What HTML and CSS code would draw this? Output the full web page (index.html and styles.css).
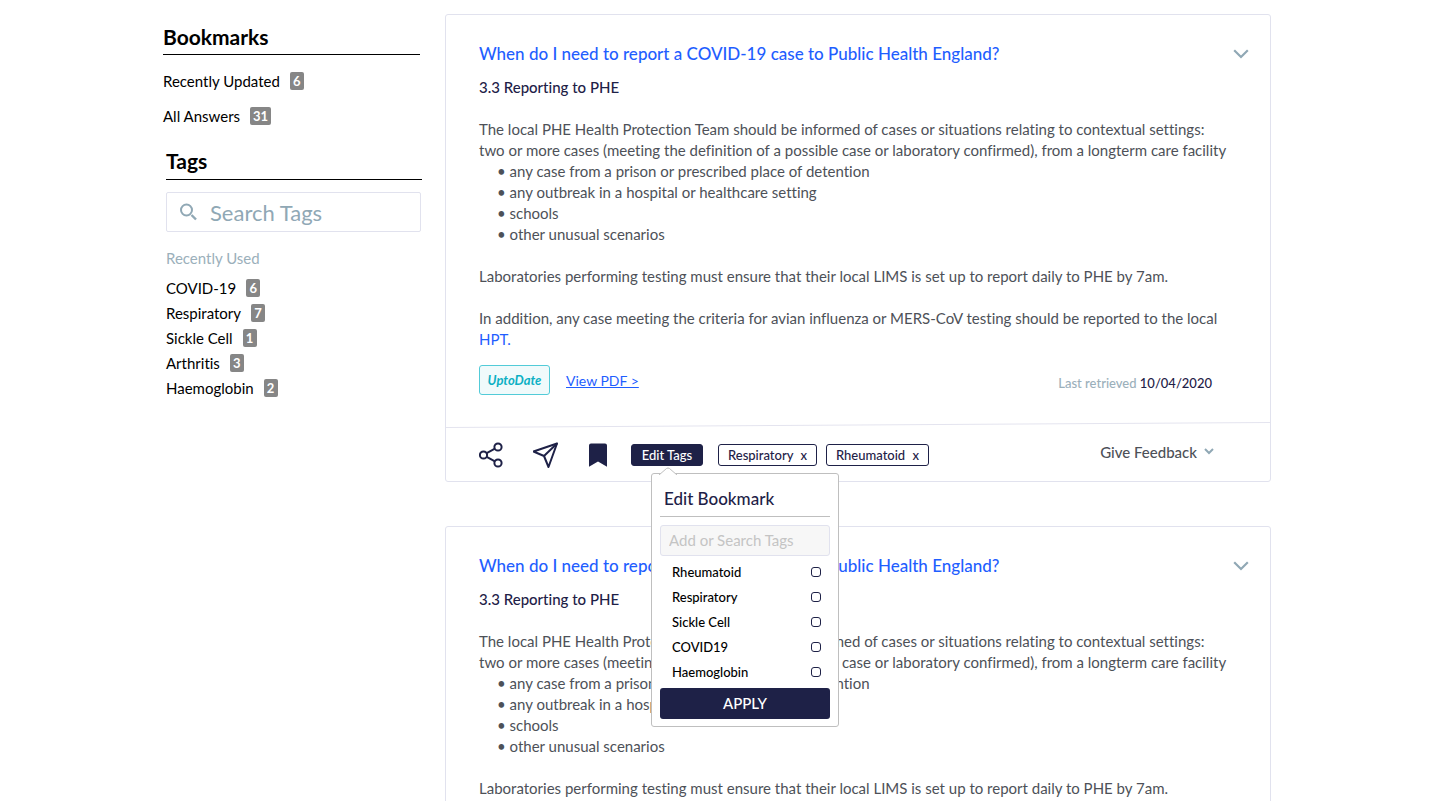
FILE: index.html
```
<!DOCTYPE html>
<html lang="en">
<head>
    <meta charset="UTF-8">
    <meta name="viewport" content="width=device-width, initial-scale=1.0">
    <title>Bookmarks</title>
    <link rel="stylesheet" href="styles.css">
</head>
<body>
    <div class="page">
        <!-- Sidebar -->
        <aside class="sidebar">
            <h2>Bookmarks</h2>
            <ul class="bookmarks">
                <li><a href="#">Recently Updated</a><span class="count">6</span></li>
                <li><a href="#">All Answers</a><span class="count">31</span></li>
            </ul>

            <section class="tags">
                <h2>Tags</h2>
                <div class="search">
                    <svg width="18" height="18" viewBox="0 0 18 18" fill="none" stroke="#90a8b5" stroke-width="2">
                        <circle cx="6.500" cy="7" r="5.500"/>
                        <path d="M11.500 12l4.500 4.500" stroke-width="2.4"/>
                    </svg>
                    <input type="text" placeholder="Search Tags" aria-label="Search Tags">
                </div>
                <h3>Recently Used</h3>
                <ul class="recent">
                    <li><a href="#">COVID-19</a><span class="count">6</span></li>
                    <li><a href="#">Respiratory</a><span class="count">7</span></li>
                    <li><a href="#">Sickle Cell</a><span class="count">1</span></li>
                    <li><a href="#">Arthritis</a><span class="count">3</span></li>
                    <li><a href="#">Haemoglobin</a><span class="count">2</span></li>
                </ul>
            </section>
        </aside>

        <!-- Answers -->
        <main class="answers">
            <article class="card">
                <div class="content">
                    <header>
                        <a class="title" href="#">When do I need to report a COVID-19 case to Public Health England?</a>
                        <button class="toggle" aria-label="Collapse">
                            <svg width="16" height="10" viewBox="0 0 16 10" fill="none" stroke="#90a8b5" stroke-width="2.2"><path d="M1.2 1.3L8 8l6.800-6.700"/></svg>
                        </button>
                    </header>
                    <h4>3.3 Reporting to PHE</h4>
                    <div class="text">
                        <p>The local PHE Health Protection Team should be informed of cases or situations relating to contextual settings:<br>two or more cases (meeting the definition of a possible case or laboratory confirmed), from a longterm care facility</p>
                        <ul>
                            <li>any case from a prison or prescribed place of detention</li>
                            <li>any outbreak in a hospital or healthcare setting</li>
                            <li>schools</li>
                            <li>other unusual scenarios</li>
                        </ul>
                        <p>Laboratories performing testing must ensure that their local LIMS is set up to report daily to PHE by 7am.</p>
                        <p>In addition, any case meeting the criteria for avian influenza or MERS-CoV testing should be reported to the local<br><a href="#">HPT.</a></p>
                    </div>
                    <div class="source">
                        <span class="uptodate">UptoDate</span>
                        <a href="#">View PDF &gt;</a>
                        <span class="retrieved">Last retrieved <time>10/04/2020</time></span>
                    </div>
                </div>
                <svg class="divider" height="6" viewBox="0 0 824 6" preserveAspectRatio="none"><path d="M0 5.5L824 .5" stroke="#e4e4ef"/></svg>
                <footer>
                    <button class="icon" aria-label="Share">
                        <svg width="26" height="28" viewBox="0 0 26 28" fill="none" stroke="#1e2147" stroke-width="2">
                            <circle cx="4.500" cy="14" r="3.600"/>
                            <circle cx="19" cy="6" r="3.600"/>
                            <circle cx="19" cy="22" r="3.600"/>
                            <path d="M7.700 12.200l8.200-4.500M7.700 15.800l8.200 4.500"/>
                        </svg>
                    </button>
                    <button class="icon" aria-label="Send">
                        <svg width="26" height="28" viewBox="0 0 26 28" fill="none" stroke="#1e2147" stroke-width="2" stroke-linejoin="round">
                            <path d="M24 2.500L0.500 10.500l10.500 4.500L15.500 26z"/>
                            <path d="M24 2.500L11 15"/>
                        </svg>
                    </button>
                    <button class="icon" aria-label="Bookmark">
                        <svg width="20" height="28" viewBox="0 0 20 28"><path d="M3 2.500h14a2 2 0 0 1 2 2v21.300l-9-5.300-9 5.300V4.500a2 2 0 0 1 2-2z" fill="#1e2147"/></svg>
                    </button>
                    <div class="edit">
                        <button class="edit-tags">Edit Tags</button>
                        <form class="popover">
                            <svg class="arrow" width="20" height="8" viewBox="0 0 20 8"><path d="M1 8L8.500 1.500q1.500-1 3 0L19 8" fill="#fff" stroke="#bfbfbf"/></svg>
                            <h3>Edit Bookmark</h3>
                            <input type="text" placeholder="Add or Search Tags" aria-label="Add or Search Tags">
                            <label>Rheumatoid<input type="checkbox"></label>
                            <label>Respiratory<input type="checkbox"></label>
                            <label>Sickle Cell<input type="checkbox"></label>
                            <label>COVID19<input type="checkbox"></label>
                            <label>Haemoglobin<input type="checkbox"></label>
                            <button type="button">APPLY</button>
                        </form>
                    </div>
                    <button class="tag">Respiratory <span>x</span></button>
                    <button class="tag">Rheumatoid <span>x</span></button>
                    <button class="feedback">Give Feedback
                        <svg width="10" height="7" viewBox="0 0 10 7" fill="none" stroke="#90a8b5" stroke-width="2"><path d="M1 1l4 4 4-4"/></svg>
                    </button>
                </footer>
            </article>

            <article class="card">
                <div class="content">
                    <header>
                        <a class="title" href="#">When do I need to report a COVID-19 case to Public Health England?</a>
                        <button class="toggle" aria-label="Collapse">
                            <svg width="16" height="10" viewBox="0 0 16 10" fill="none" stroke="#90a8b5" stroke-width="2.2"><path d="M1.2 1.3L8 8l6.800-6.700"/></svg>
                        </button>
                    </header>
                    <h4>3.3 Reporting to PHE</h4>
                    <div class="text">
                        <p>The local PHE Health Protection Team should be informed of cases or situations relating to contextual settings:<br>two or more cases (meeting the definition of a possible case or laboratory confirmed), from a longterm care facility</p>
                        <ul>
                            <li>any case from a prison or prescribed place of detention</li>
                            <li>any outbreak in a hospital or healthcare setting</li>
                            <li>schools</li>
                            <li>other unusual scenarios</li>
                        </ul>
                        <p>Laboratories performing testing must ensure that their local LIMS is set up to report daily to PHE by 7am.</p>
                    </div>
                </div>
            </article>
        </main>
    </div>
</body>
</html>
```
FILE: styles.css
```
* {
    box-sizing: border-box;
}
body {
    margin: 0;
    height: 100vh;
    overflow: hidden;
    font-family: Lato, sans-serif;
    font-size: 15px;
    font-variant-ligatures: none;
    color: #000;
    background-color: #fff;
}
h2, h3, h4, p, ul {
    margin: 0;
    padding: 0;
}
ul {
    list-style: none;
}
button, input {
    font-family: inherit;
}
button {
    padding: 0;
    border: none;
    background: none;
    cursor: pointer;
}
svg {
    display: block;
}
a {
    color: #1f5eff;
    text-decoration: none;
}
.page {
    display: grid;
    grid-template-columns: 258px 1fr;
    gap: 24px;
    padding: 14px 166px 0 163px;
}

/* Sidebar */
.sidebar {
    padding-top: 8px;
}
.sidebar h2 {
    width: 257px;
    height: 33px;
    font-size: 21px;
    line-height: 30px;
    border-bottom: 1px solid #000;
}
.sidebar li {
    display: flex;
    align-items: center;
    gap: 10px;
    height: 25px;
}
.sidebar li a {
    color: #000;
}
.count {
    min-width: 14px;
    padding: 0 3px;
    border-radius: 2px;
    background-color: #868686;
    color: #fff;
    font-size: 13px;
    font-weight: 700;
    line-height: 18px;
    text-align: center;
}
.bookmarks {
    display: grid;
    gap: 10px;
    padding: 13px 0 18px;
}
.tags {
    padding-left: 3px;
}
.sidebar .tags h2 {
    width: 256px;
    height: 34px;
}
.search {
    display: flex;
    align-items: center;
    gap: 12px;
    height: 40px;
    margin-top: 12px;
    padding-left: 13px;
    border: 1px solid #e1e2ee;
    border-radius: 2px;
}
.search input {
    flex: 1;
    min-width: 0;
    padding: 0;
    border: none;
    outline: none;
    font-size: 22px;
}
.search input::placeholder {
    color: #90a8b5;
}
.tags h3 {
    margin: 16px 0 7px;
    color: #9bb0bb;
    font-size: 15px;
    font-weight: 400;
    line-height: 20px;
}

/* Answers */
.answers {
    display: grid;
    gap: 44px;
}
.card {
    border: 1px solid #e1e2ee;
    border-radius: 3px;
}
.content {
    padding: 27px 21px 27px 33px;
}
.content header {
    display: flex;
    align-items: center;
    justify-content: space-between;
}
.title {
    font-size: 17px;
    font-weight: 500;
    line-height: 24px;
}
.content h4 {
    margin-top: 11px;
    color: #1e2147;
    font-size: 15px;
    font-weight: 500;
    line-height: 20px;
}
.text {
    margin-top: 22px;
    color: #4d5158;
    line-height: 21px;
    white-space: nowrap;
}
.text ul {
    padding-left: 18px;
}
.text li::before {
    content: "• ";
}
.text p + p, .text ul + p {
    margin-top: 21px;
}
.source {
    display: flex;
    align-items: center;
    gap: 16px;
    margin-top: 15px;
    padding-right: 37px;
    font-size: 14px;
}
.source a {
    text-decoration: underline;
}
.uptodate {
    width: 71px;
    border: 1px solid #52cbd8;
    border-radius: 3px;
    background-color: #f0fafb;
    color: #0cb0c4;
    font-size: 13px;
    font-style: italic;
    font-weight: 700;
    line-height: 28px;
    text-align: center;
}
.retrieved {
    margin-left: auto;
    padding-top: 6px;
    color: #9bb0bb;
    font-size: 13px;
    font-weight: 500;
}
.retrieved time {
    color: #1e2147;
}
.divider {
    width: 100%;
}

/* Action bar */
.card footer {
    display: flex;
    align-items: center;
    height: 53px;
    padding: 0 56px 0 33px;
}
.icon {
    margin-right: 28px;
}
.icon + .icon + .icon {
    margin: 0 23px 0 1px;
}
.edit {
    position: relative;
    margin-right: 15px;
}
.edit-tags, .tag {
    display: block;
    height: 22px;
    border: 1px solid #1e2147;
    border-radius: 3px;
    color: #1e2147;
    font-size: 13px;
    font-weight: 500;
}
.edit-tags {
    width: 72px;
    background-color: #1e2147;
    color: #fff;
}
.tag {
    margin-right: 9px;
    padding: 0 9px;
}
.tag span {
    margin-left: 4px;
}
.feedback {
    display: flex;
    align-items: center;
    gap: 7px;
    margin-left: auto;
    padding-bottom: 6px;
    color: #4d5158;
    font-size: 15px;
    font-weight: 500;
}

/* Edit bookmark popover */
.popover {
    position: absolute;
    top: 29px;
    left: 20px;
    z-index: 1;
    width: 188px;
    padding: 7px 8px;
    border: 1px solid #bfbfbf;
    border-radius: 3px;
    background-color: #fff;
}
.arrow {
    position: absolute;
    top: -7px;
    left: 6px;
}
.popover h3 {
    height: 36px;
    margin-bottom: 8px;
    padding-left: 4px;
    border-bottom: 1px solid #bfbfbf;
    color: #1e2147;
    font-size: 17px;
    font-weight: 500;
    line-height: 36px;
}
.popover input[type="text"] {
    display: block;
    width: 100%;
    height: 31px;
    margin-bottom: 4px;
    padding: 0 8px;
    border: 1px solid #e1e2ee;
    border-radius: 3px;
    background-color: #f7f7f7;
    font-size: 15px;
}
.popover input::placeholder {
    color: #c4c4c4;
}
.popover label {
    display: flex;
    align-items: center;
    justify-content: space-between;
    height: 25px;
    padding: 0 9px 0 12px;
    font-size: 13px;
    font-weight: 500;
}
.popover input[type="checkbox"] {
    appearance: none;
    width: 10px;
    height: 10px;
    margin: 0;
    border: 1px solid #1e2147;
    border-radius: 3px;
}
.popover button {
    width: 100%;
    height: 31px;
    margin-top: 3px;
    border-radius: 3px;
    background-color: #1e2147;
    color: #fff;
    font-size: 15px;
    font-weight: 500;
}
```
